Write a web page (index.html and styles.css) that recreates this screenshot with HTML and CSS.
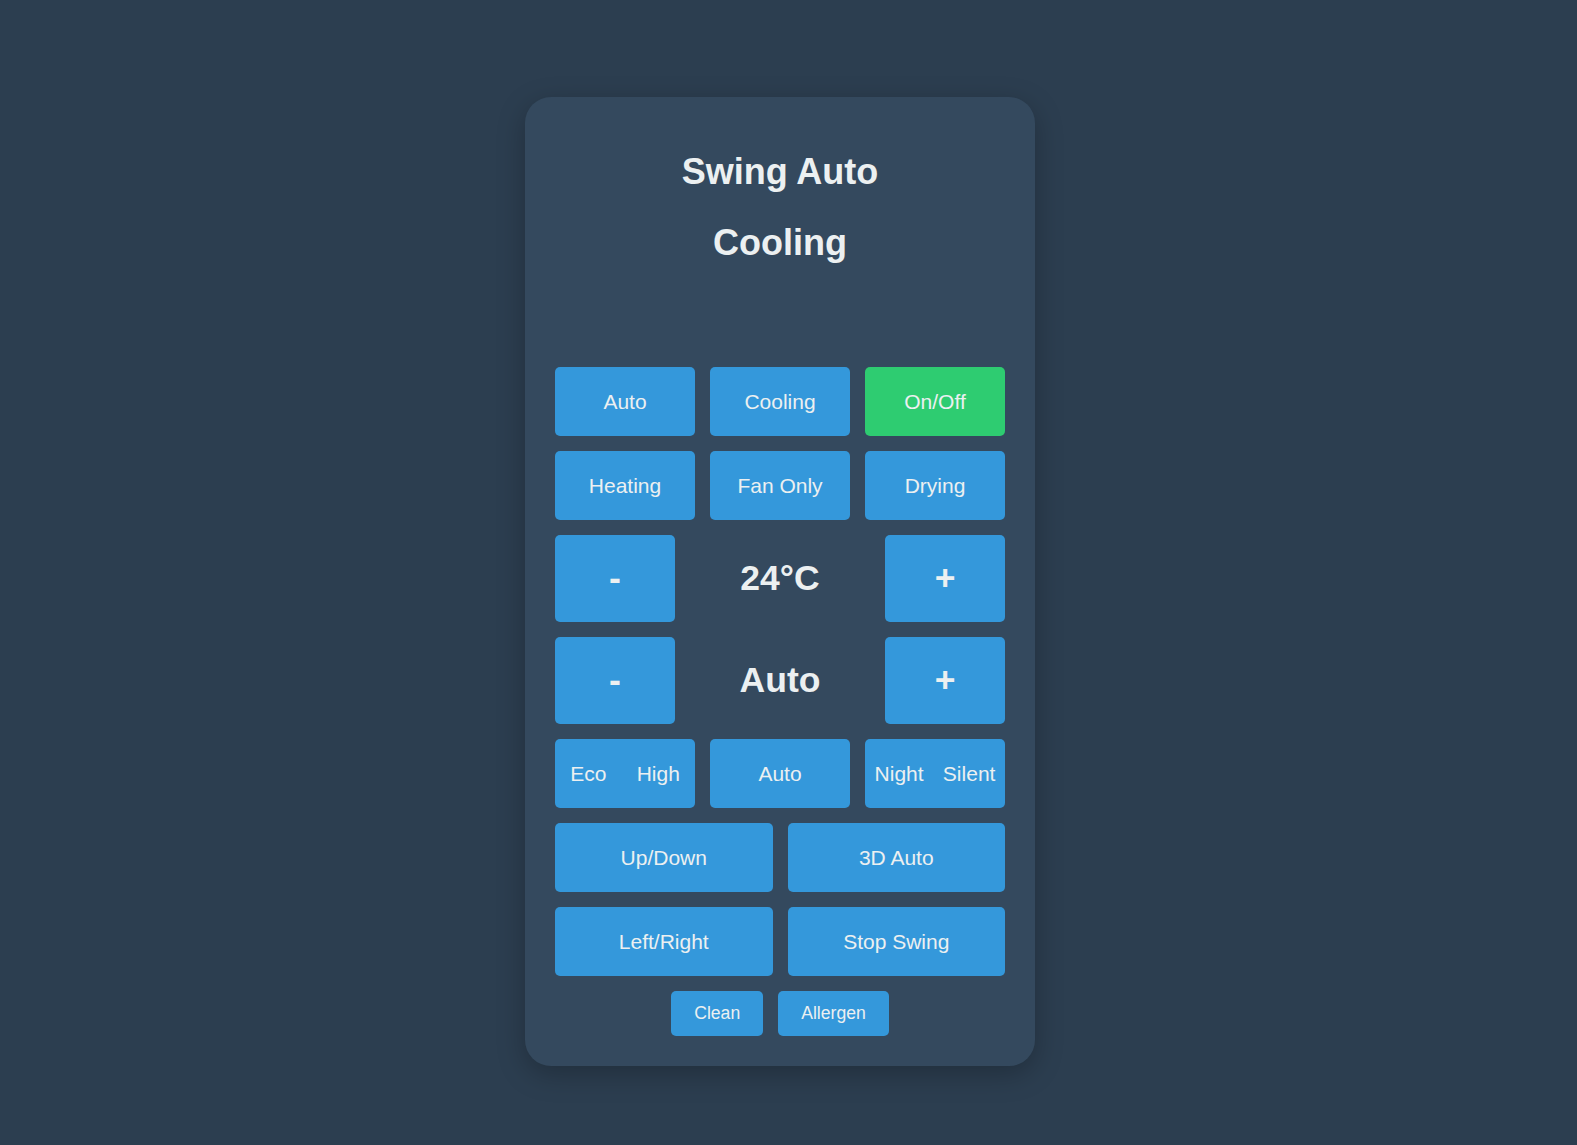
FILE: index.html
```html
<!DOCTYPE html>
<html lang="en">
<head>
<meta charset="utf-8">
<title>AC Remote</title>
<link rel="stylesheet" href="styles.css">
</head>
<body>
<div class="page">
  <div class="remote">
    <div class="display">
      <div class="display-line swing-status">Swing Auto</div>
      <div class="display-line mode-status">Cooling</div>
    </div>
    <div class="grid-3">
      <button class="btn">Auto</button>
      <button class="btn">Cooling</button>
      <button class="btn btn-power">On/Off</button>
      <button class="btn">Heating</button>
      <button class="btn">Fan Only</button>
      <button class="btn">Drying</button>
    </div>
    <div class="adjust-row">
      <button class="btn btn-adjust">-</button>
      <div class="adjust-value">24°C</div>
      <button class="btn btn-adjust">+</button>
    </div>
    <div class="adjust-row">
      <button class="btn btn-adjust">-</button>
      <div class="adjust-value">Auto</div>
      <button class="btn btn-adjust">+</button>
    </div>
    <div class="grid-3">
      <button class="btn btn-split"><span>Eco</span><span>High</span></button>
      <button class="btn">Auto</button>
      <button class="btn btn-split"><span>Night</span><span>Silent</span></button>
    </div>
    <div class="grid-2">
      <button class="btn">Up/Down</button>
      <button class="btn">3D Auto</button>
      <button class="btn">Left/Right</button>
      <button class="btn">Stop Swing</button>
    </div>
    <div class="extras">
      <button class="btn btn-small">Clean</button>
      <button class="btn btn-small">Allergen</button>
    </div>
  </div>
</div>
</body>
</html>
```
FILE: styles.css
```css
html, body {
  margin: 0;
  padding: 0;
  background: #2c3e50;
  font-family: "Liberation Sans", Arial, Helvetica, sans-serif;
  color: #ecf0f1;
}

.page {
  min-height: 1145px;
  box-sizing: border-box;
  padding: 97px 17px 0 0;
  display: flex;
  justify-content: center;
  align-items: flex-start;
}

.remote {
  width: 510px;
  box-sizing: border-box;
  padding: 30px;
  background: #34495e;
  border-radius: 26px;
  box-shadow: 0 8px 28px rgba(0, 0, 0, 0.25);
  display: flex;
  flex-direction: column;
  gap: 15px;
}

.display {
  display: flex;
  flex-direction: column;
  align-items: center;
  gap: 31px;
  padding-top: 25px;
  padding-bottom: 89px;
}

.display-line {
  font-size: 36px;
  font-weight: bold;
  line-height: 40px;
  text-align: center;
}

.grid-3 {
  display: grid;
  grid-template-columns: repeat(3, 1fr);
  gap: 15px;
}

.grid-2 {
  display: grid;
  grid-template-columns: repeat(2, 1fr);
  gap: 15px;
}

.btn {
  height: 69px;
  border: none;
  border-radius: 5px;
  background: #3498db;
  color: #ecf0f1;
  font-family: "Liberation Sans", Arial, Helvetica, sans-serif;
  font-size: 21px;
  padding: 0;
  margin: 0;
  display: flex;
  align-items: center;
  justify-content: center;
  cursor: pointer;
}

.btn-power {
  background: #2ecc71;
}

.btn-split {
  justify-content: space-around;
}

.adjust-row {
  display: grid;
  grid-template-columns: 120px 1fr 120px;
  gap: 15px;
  align-items: center;
}

.btn-adjust {
  height: 87px;
  font-size: 35.5px;
  font-weight: bold;
}

.adjust-value {
  text-align: center;
  font-size: 35.5px;
  font-weight: bold;
}

.extras {
  display: flex;
  justify-content: center;
  gap: 15px;
}

.btn-small {
  height: 45px;
  font-size: 17.6px;
  padding: 0 23px;
}
```
